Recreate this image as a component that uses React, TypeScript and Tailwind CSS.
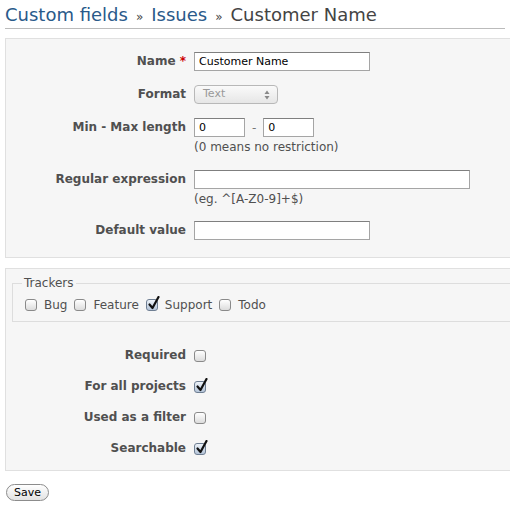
import React from "react";

const font = { fontFamily: '"DejaVu Sans", Verdana, sans-serif' };

function Box({ checked }: { checked?: boolean }) {
  return (
    <span
      className={`relative inline-block w-[12px] h-[12px] shrink-0 rounded-[3px] border align-middle bg-gradient-to-b ${
        checked ? "border-[#6f7f93] from-[#eef3f9] to-[#b4c4d8]" : "border-[#8a8a8a] from-[#ffffff] to-[#dcdcdc]"
      }`}
    >
      {checked && (
        <svg className="absolute left-[1px] -top-[4px]" width="12" height="14" viewBox="0 0 12 14">
          <path d="M1.5 8.5 L4.5 12 L10.5 1" fill="none" stroke="#111" strokeWidth="2.2" strokeLinecap="round" strokeLinejoin="round" />
        </svg>
      )}
    </span>
  );
}

function Label({ children }: { children: React.ReactNode }) {
  return (
    <div className="w-[188px] shrink-0 pr-[8px] text-right font-bold text-[#505050] leading-[19px]">
      {children}
    </div>
  );
}

function TextInput({ w, value }: { w: string; value?: string }) {
  return (
    <div className={`${w} h-[19px] border border-[#a5a5a5] border-t-[#7f7f7f] bg-white px-[4px] text-[11px] leading-[17px] text-black`}>
      {value}
    </div>
  );
}

function Sep() {
  return <span className="inline-block mx-[8px] text-[12px] leading-none text-[#444] align-baseline">»</span>;
}

export default function App() {
  return (
    <div className="w-[510px] h-[512px] overflow-hidden bg-white text-[12px] text-[#505050]" style={font}>
      {/* titre */}
      <h2 className="mx-[5px] pt-[5px] pb-[3px] border-b border-[#bbbbbb] text-[18px] leading-[20px] font-normal text-[#444]">
        <span className="text-[#2a5a8a]">Custom fields</span>
        <Sep />
        <span className="text-[#2a5a8a]">Issues</span>
        <Sep />
        Customer Name
      </h2>

      {/* bloc principal */}
      <div className="ml-[5px] mt-[9px] w-[520px] border border-[#e0e0e0] bg-[#f6f6f6] pt-[13px] pb-[17px]">
        <div className="flex">
          <Label>
            Name <span className="text-[#cc0000]">*</span>
          </Label>
          <TextInput w="w-[176px]" value="Customer Name" />
        </div>

        <div className="flex mt-[14px]">
          <Label>Format</Label>
          <div className="w-[84px] h-[19px] rounded-[4px] border border-[#b8b8b8] bg-gradient-to-b from-[#fafafa] to-[#e6e6e6] flex items-center justify-between pl-[8px] pr-[7px] text-[11px] text-[#999]">
            <span>Text</span>
            <svg width="6" height="10" viewBox="0 0 6 10">
              <path d="M3 0.5 L5.5 4 L0.5 4 Z" fill="#888" />
              <path d="M3 9.5 L5.5 6 L0.5 6 Z" fill="#888" />
            </svg>
          </div>
        </div>

        <div className="flex mt-[14px]">
          <Label>Min - Max length</Label>
          <div>
            <div className="flex items-center">
              <TextInput w="w-[51px]" value="0" />
              <span className="mx-[7px] text-[#777]">-</span>
              <TextInput w="w-[51px]" value="0" />
            </div>
            <div className="mt-[3px] leading-[15px] font-normal">(0 means no restriction)</div>
          </div>
        </div>

        <div className="flex mt-[15px]">
          <Label>Regular expression</Label>
          <div>
            <TextInput w="w-[276px]" />
            <div className="mt-[3px] leading-[15px]">(eg. ^[A-Z0-9]+$)</div>
          </div>
        </div>

        <div className="flex mt-[14px]">
          <Label>Default value</Label>
          <TextInput w="w-[176px]" />
        </div>
      </div>

      {/* bloc trackers + options */}
      <div className="ml-[5px] mt-[10px] w-[520px] border border-[#e0e0e0] bg-[#f6f6f6] pt-[7px] pb-[12px]">
        <fieldset className="ml-[6px] border border-[#dddddd] px-[12px] pb-[7px]">
          <legend className="px-[2px] -ml-[3px] leading-[14px]">Trackers</legend>
          <div className="flex items-center gap-[7px] mt-[6px]">
            <Box />
            <span>Bug</span>
            <Box />
            <span>Feature</span>
            <Box checked />
            <span>Support</span>
            <Box />
            <span>Todo</span>
          </div>
        </fieldset>

        <div className="mt-[24px] flex flex-col gap-[12px]">
          {[
            ["Required", false],
            ["For all projects", true],
            ["Used as a filter", false],
            ["Searchable", true],
          ].map(([label, checked]) => (
            <div key={label as string} className="flex items-center">
              <Label>{label as string}</Label>
              <Box checked={checked as boolean} />
            </div>
          ))}
        </div>
      </div>

      <div className="ml-[6px] mt-[12px]">
        <button className="h-[17px] px-[7px] rounded-full border border-[#8c8c8c] bg-gradient-to-b from-[#ffffff] to-[#e2e2e2] text-[11px] leading-[15px] text-black">
          Save
        </button>
      </div>
    </div>
  );
}
